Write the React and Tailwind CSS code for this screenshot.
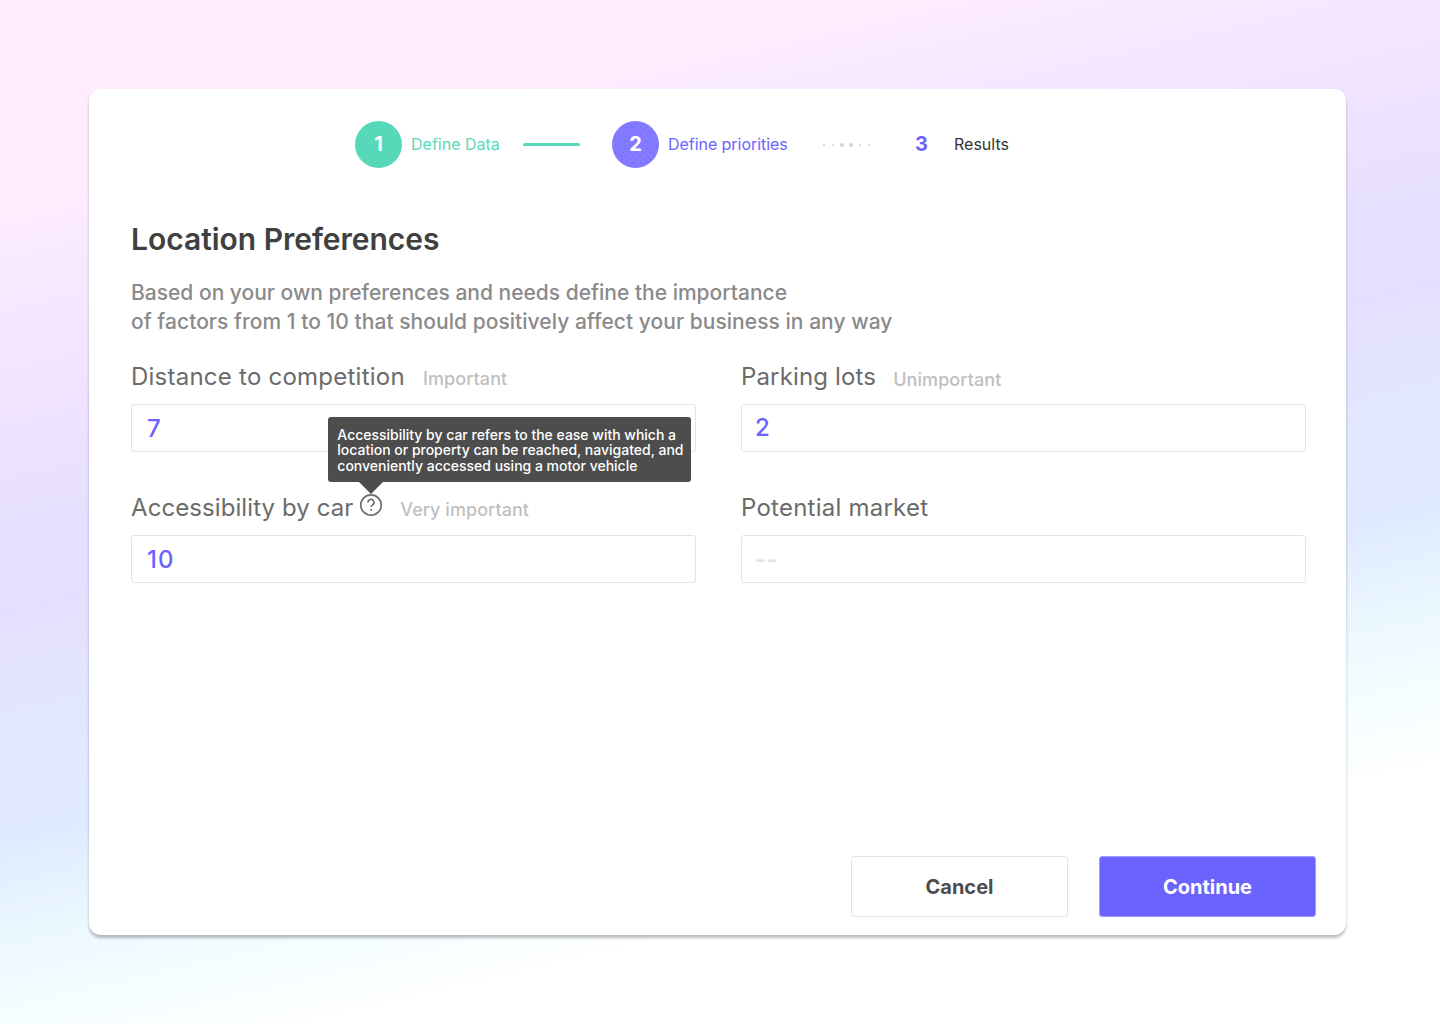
import React from "react";

function Field({ label, labelClass, note, value, placeholder, help, inputClass, noteClass }) {
  return (
    <div className="flex h-[131px] flex-col">
      <div className="flex h-[45px] items-start whitespace-nowrap">
        <label className={labelClass}>{label}</label>
        {help}
        {note && <span className={noteClass}>{note}</span>}
      </div>
      <div className={inputClass}>
        {value ? (
          <span className="text-[#6C63FF]">{value}</span>
        ) : (
          <span className="font-semibold text-[#E3E3E6]">{placeholder}</span>
        )}
      </div>
    </div>
  );
}

const labelText = "text-[24px] font-normal leading-9 text-[#6B6B6B]";

const inputBox =
  "flex h-12 items-center rounded-[3px] border border-[#E4E4E7] bg-white text-[24px] font-medium leading-none";

function Help() {
  return (
    <span className="relative ml-1.5 mt-[3px] block size-6">
      <svg viewBox="0 0 24 24" className="size-6" fill="none" stroke="#717171">
        <circle cx="12" cy="12" r="10.2" strokeWidth="1.8" />
        <path d="M9 9.6a3 2.9 0 1 1 4.6 2.2c-1 .7-1.5 1.2-1.5 2.3" strokeWidth="1.6" />
        <circle cx="12.1" cy="16.7" r="1" fill="#717171" stroke="none" />
      </svg>
      <span className="absolute -left-[31px] -top-[76px] z-10 flex h-[65px] w-[363px] items-center rounded-[3px] bg-[#4D4D4D] pl-[9px] pt-px text-[14px] font-medium leading-[15.5px] tracking-[-0.01px] text-white">
        <span>
          Accessibility by car refers to the ease with which a<br />
          location or property can be reached, navigated, and<br />
          conveniently accessed using a motor vehicle
        </span>
      </span>
      <svg viewBox="0 0 24 12" className="absolute left-0 -top-[11px] z-10 h-3 w-6">
        <path d="M0 0H24L12 12Z" fill="#4D4D4D" />
      </svg>
    </span>
  );
}

export default function App() {
  return (
    <div
      className="h-[1024px] w-[1440px] overflow-hidden pl-[89px] pt-[89px] antialiased font-['Inter',sans-serif] bg-[linear-gradient(167deg,#ffecff_0%,#ffecff_15.5%,#f5e8ff_21.5%,#f1e4ff_29%,#e6dfff_40%,#e6dfff_44.5%,#e0e9ff_57.5%,#e0eaff_62%,#ebf7ff_69%,#f4fdff_75%,#ffffff_81%)]"
    >
      <main className="flex h-[846px] w-[1257px] flex-col rounded-xl bg-white px-[42px] pt-8 shadow-[0_3px_3px_rgba(0,0,0,0.26)]">
        <nav className="ml-[224px] flex h-[47px] items-center whitespace-nowrap text-[16px]">
          <span className="flex size-[47px] items-center justify-center rounded-full bg-[#57D9B9] pb-0.5 text-[20px] font-bold text-white">1</span>
          <span className="ml-[9px] w-[112px] pb-0.5 text-[#57D9B9]">Define Data</span>
          <span className="h-[3px] w-[57px] rounded-full bg-[#57D9B9]" />
          <span className="ml-8 flex size-[47px] items-center justify-center rounded-full bg-[#837AFF] bg-[radial-gradient(#6C63FF_0.5px,transparent_0.9px),radial-gradient(#6C63FF_0.5px,transparent_0.9px)] bg-[length:7px_7px] bg-[position:0_0,4px_3px] pb-0.5 text-[20px] font-bold text-white">2</span>
          <span className="ml-[9px] w-[155px] pb-0.5 tracking-[-0.05px] text-[#6C63FF]">Define priorities</span>
          <svg viewBox="0 0 50 6" className="h-1.5 w-[50px]" fill="#D0D4D6">
            <circle cx="1" cy="3" r="1" />
            <circle cx="10" cy="3" r="1" />
            <circle cx="19" cy="3" r="2" />
            <circle cx="28" cy="3" r="2" />
            <circle cx="37" cy="3" r="1" />
            <circle cx="46" cy="3" r="1" />
          </svg>
          <span className="ml-[42px] w-[39px] pb-0.5 text-[20px] font-bold text-[#6C63FF]">3</span>
          <span className="pb-0.5 text-[#333333]">Results</span>
        </nav>
        <h1 className="mt-[51px] text-[30px] font-semibold leading-[40px] tracking-[-0.02px] text-[#404040]">Location Preferences</h1>
        <p className="mt-[19px] whitespace-nowrap text-[21px] font-medium leading-[29px] tracking-[0.04px] text-[#8A8A8A]">
          <span className="tracking-normal">Based on your own preferences and needs define the importance</span>
          <br />
          of factors from 1 to 10 that should positively affect your business in any way
        </p>
        <section className="mt-[23px] grid w-[1175px] grid-cols-[565px_565px] gap-x-[45px]">
          <Field
            label="Distance to competition"
            labelClass={`${labelText} tracking-[0.24px]`}
            note="Important"
            value="7"
            inputClass={`${inputBox} pl-[15px] pt-0.5`}
            noteClass="ml-[18px] mt-0.5 text-[18px] font-medium leading-9 tracking-[0.1px] text-[#BFBFBF]"
          />
          <Field
            label="Parking lots"
            labelClass={`${labelText} tracking-[0.15px]`}
            note="Unimportant"
            value="2"
            inputClass={`${inputBox} pl-[13px]`}
            noteClass="ml-[17px] mt-[3px] text-[18px] font-medium leading-9 tracking-[0.08px] text-[#BFBFBF]"
          />
          <Field
            label="Accessibility by car"
            labelClass={`${labelText} tracking-[0.08px]`}
            note="Very important"
            value="10"
            help={<Help />}
            inputClass={`${inputBox} pl-[15px] pt-0.5 tracking-[1px]`}
            noteClass="ml-[17px] mt-0.5 text-[18px] font-medium leading-9 tracking-[0.05px] text-[#BFBFBF]"
          />
          <Field
            label="Potential market"
            labelClass={`${labelText} tracking-[0.24px]`}
            placeholder="--"
            inputClass={`${inputBox} pl-[13px] pt-0.5`}
          />
        </section>
        <footer className="-mr-3 mb-[18px] mt-auto flex justify-end gap-[31px] text-[20px] font-bold">
          <button className="h-[61px] w-[217px] rounded-[3px] border border-[#E4E4E7] text-[#4D4D4D]">Cancel</button>
          <button className="h-[61px] w-[217px] rounded-[3px] border border-[#A19BFF] bg-[#6C63FF] text-white">Continue</button>
        </footer>
      </main>
    </div>
  );
}
